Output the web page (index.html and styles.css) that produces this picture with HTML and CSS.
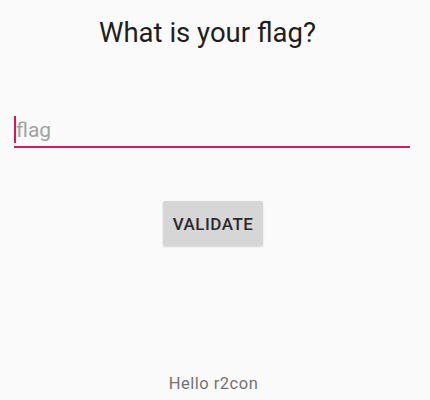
FILE: index.html
```html
<!DOCTYPE html>
<html>
<head>
<meta charset="utf-8">
<link rel="stylesheet" href="styles.css">
</head>
<body>
<main class="screen">
  <h1 class="title">What is your flag?</h1>
  <div class="field">
    <span class="cursor"></span>
    <span class="hint">flag</span>
  </div>
  <div class="actions">
    <button class="btn">VALIDATE</button>
  </div>
  <div class="spacer"></div>
  <p class="footer">Hello r2con</p>
</main>
</body>
</html>
```

FILE: styles.css
```css
html, body {
  margin: 0;
  padding: 0;
  background: #fafafa;
}
.screen {
  width: 430px;
  height: 400px;
  display: flex;
  flex-direction: column;
  font-family: Roboto, "Noto Sans", sans-serif;
}
.title {
  margin: 15px 0 0;
  padding-right: 15px;
  font-size: 27.5px;
  font-weight: 400;
  color: #1e1e1e;
  text-align: center;
  line-height: 36px;
}
.field {
  margin: 65px 20px 0 14px;
  height: 30px;
  border-bottom: 2px solid #d81b60;
  display: flex;
  align-items: flex-end;
}
.cursor {
  width: 2px;
  height: 27px;
  background: #e0115f;
  margin-bottom: 3px;
}
.hint {
  font-size: 21px;
  color: #a2a2a2;
  line-height: 28px;
  margin-bottom: 2px;
}
.actions {
  display: flex;
  justify-content: center;
  padding-right: 4px;
  margin-top: 53px;
}
.btn {
  width: 100px;
  height: 45px;
  padding: 0;
  border: none;
  border-radius: 2px;
  background: #d6d6d6;
  color: #2a2a2a;
  font-family: Roboto, sans-serif;
  font-weight: 500;
  font-size: 17px;
  letter-spacing: 0.5px;
  box-shadow: 0 1px 2px rgba(0,0,0,0.15);
}
.spacer { flex: 1; }
.footer {
  margin: 0 0 6px;
  padding-right: 3px;
  text-align: center;
  font-size: 16.5px;
  letter-spacing: 0.5px;
  color: #737373;
  line-height: 20px;
}
```
